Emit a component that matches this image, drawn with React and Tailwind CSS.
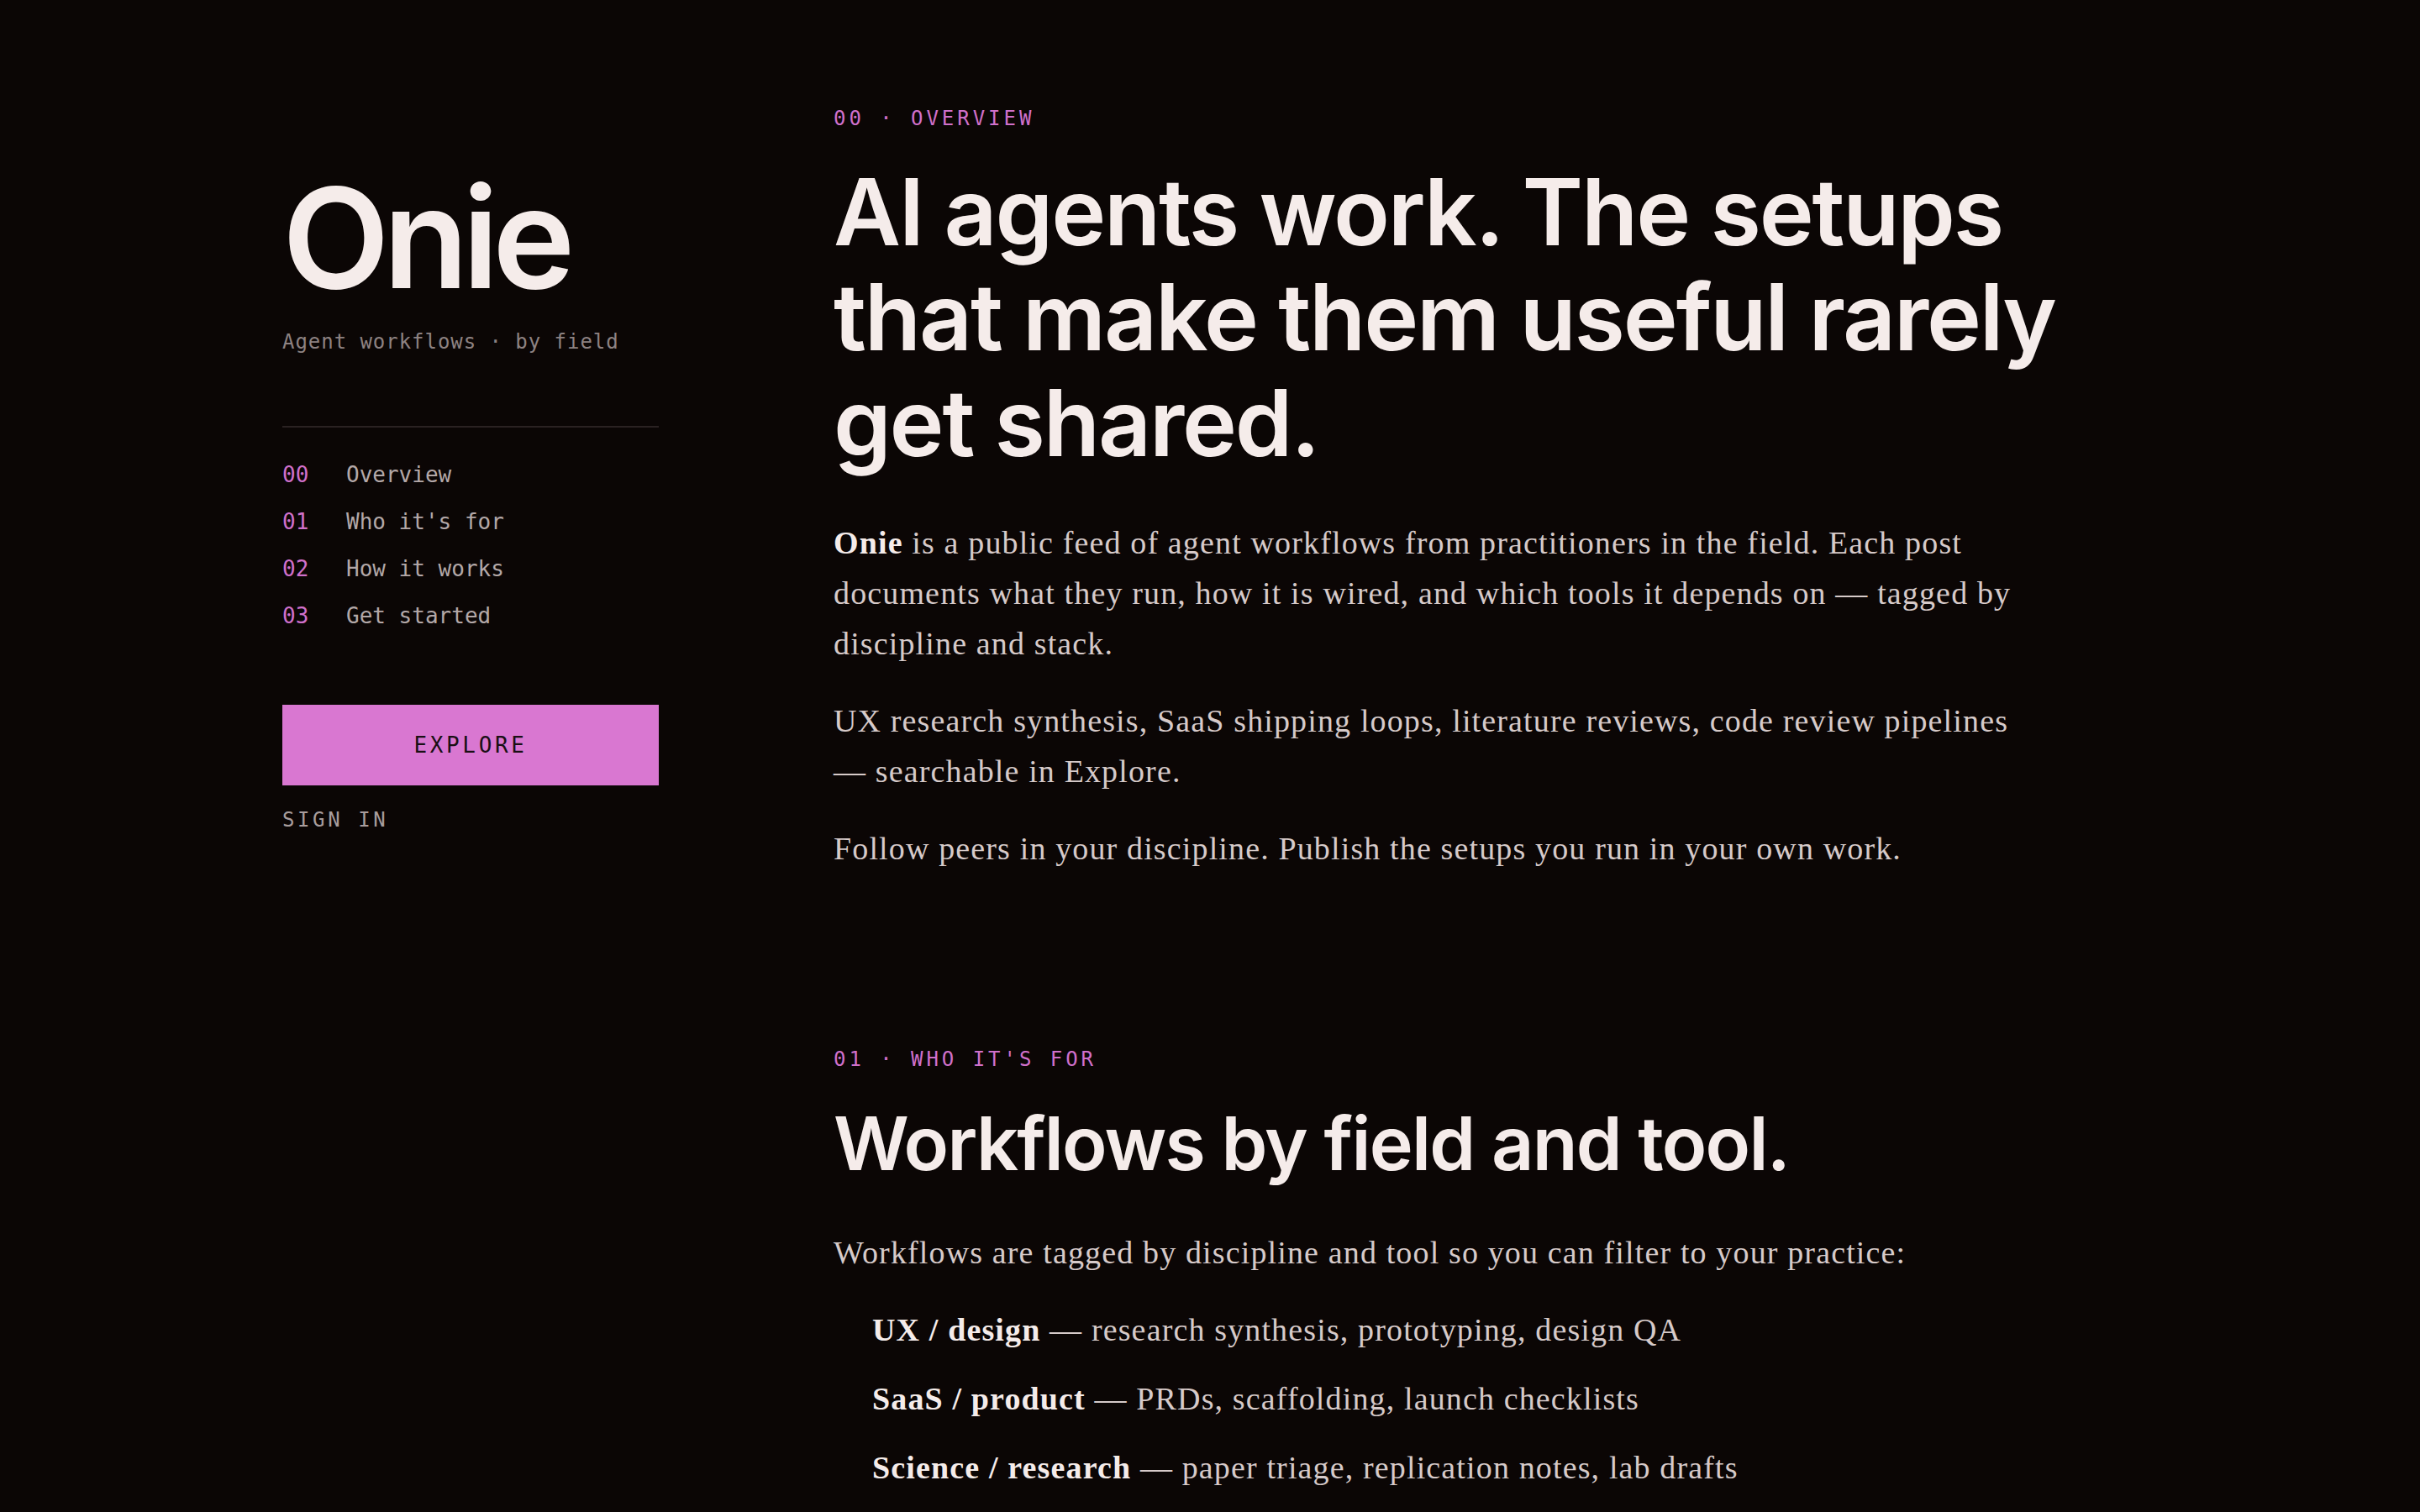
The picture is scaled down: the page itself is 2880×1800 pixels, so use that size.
import React from "react";

const NAV = [
  { num: "00", label: "Overview" },
  { num: "01", label: "Who it's for" },
  { num: "02", label: "How it works" },
  { num: "03", label: "Get started" },
];

const FIELDS = [
  { tag: "UX / design", desc: "research synthesis, prototyping, design QA" },
  { tag: "SaaS / product", desc: "PRDs, scaffolding, launch checklists" },
  { tag: "Science / research", desc: "paper triage, replication notes, lab drafts" },
];

const mono = "font-['DejaVu_Sans_Mono','Liberation_Mono',monospace]";
const sans = "font-['Inter','Liberation_Sans',sans-serif]";
const serif = "font-['Liberation_Serif','DejaVu_Serif',serif]";

function Sidebar() {
  return (
    <aside className="w-[448px] shrink-0 pt-[200px]">
      <h1 className={`${sans} text-[166px] font-semibold leading-none tracking-[-0.045em] text-[#f5ecea]`}>Onie</h1>
      <p className={`${mono} mt-[29px] text-[24px] leading-none tracking-[0.04em] text-[#8d8282]`}>Agent workflows · by field</p>
      <div className="mt-[88px] h-[2px] bg-[#2a2222]" />
      <nav className={`${mono} mt-[28px] text-[26px]`}>
        {NAV.map((item) => (
          <a key={item.num} href={`#s${item.num}`} className="flex h-[56px] items-center">
            <span className="w-[76px] text-[#d070cb]">{item.num}</span>
            <span className="text-[#b3a8a8]">{item.label}</span>
          </a>
        ))}
      </nav>
      <button className={`${mono} mt-[78px] flex h-[96px] w-full items-center justify-center bg-[#d977d1] text-[26px] tracking-[0.14em] text-[#1a0f14]`}>
        EXPLORE
      </button>
      <a href="#signin" className={`${mono} mt-[29px] block text-[24px] leading-none tracking-[0.15em] text-[#a89d9d]`}>SIGN IN</a>
    </aside>
  );
}

function Label({ children }) {
  return <p className={`${mono} text-[24px] leading-none tracking-[0.165em] text-[#d070cb]`}>{children}</p>;
}

function App() {
  return (
    <div className="flex min-h-screen gap-[208px] bg-[#0b0605] pl-[336px]">
      <Sidebar />
      <main className="w-[1520px] pt-[129px]">
        <section id="s00">
          <Label>00 · OVERVIEW</Label>
          <h2 className={`${sans} mt-[37px] text-[110px] font-semibold leading-[1.14] tracking-[-0.02em] text-[#f5ecea]`}>
            AI agents work. The setups<br />that make them useful rarely<br />get shared.
          </h2>
          <div className={`${serif} mt-[50px] max-w-[1430px] text-[38px] leading-[60px] tracking-[0.03em] text-[#d6cac9]`}>
            <p className="mb-[32px]">
              <strong className="font-bold text-[#f5ecea]">Onie</strong> is a public feed of agent workflows from practitioners in the field. Each post documents what they run, how it is wired, and which tools it depends on — tagged by discipline and stack.
            </p>
            <p className="mb-[32px]">UX research synthesis, SaaS shipping loops, literature reviews, code review pipelines — searchable in Explore.</p>
            <p>Follow peers in your discipline. Publish the setups you run in your own work.</p>
          </div>
        </section>

        <section id="s01" className="mt-[209px]">
          <Label>01 · WHO IT'S FOR</Label>
          <h2 className={`${sans} mt-[38px] text-[88px] font-semibold leading-[1.14] tracking-[-0.02em] text-[#f5ecea]`}>
            Workflows by field and tool.
          </h2>
          <div className={`${serif} mt-[50px] max-w-[1430px] text-[38px] leading-[60px] tracking-[0.03em] text-[#d6cac9]`}>
            <p>Workflows are tagged by discipline and tool so you can filter to your practice:</p>
            <ul className="mt-[32px] flex flex-col gap-[22px] pl-[46px]">
              {FIELDS.map((f) => (
                <li key={f.tag}>
                  <strong className="font-bold text-[#f5ecea]">{f.tag}</strong> — {f.desc}
                </li>
              ))}
            </ul>
          </div>
        </section>
      </main>
    </div>
  );
}

export default App;
